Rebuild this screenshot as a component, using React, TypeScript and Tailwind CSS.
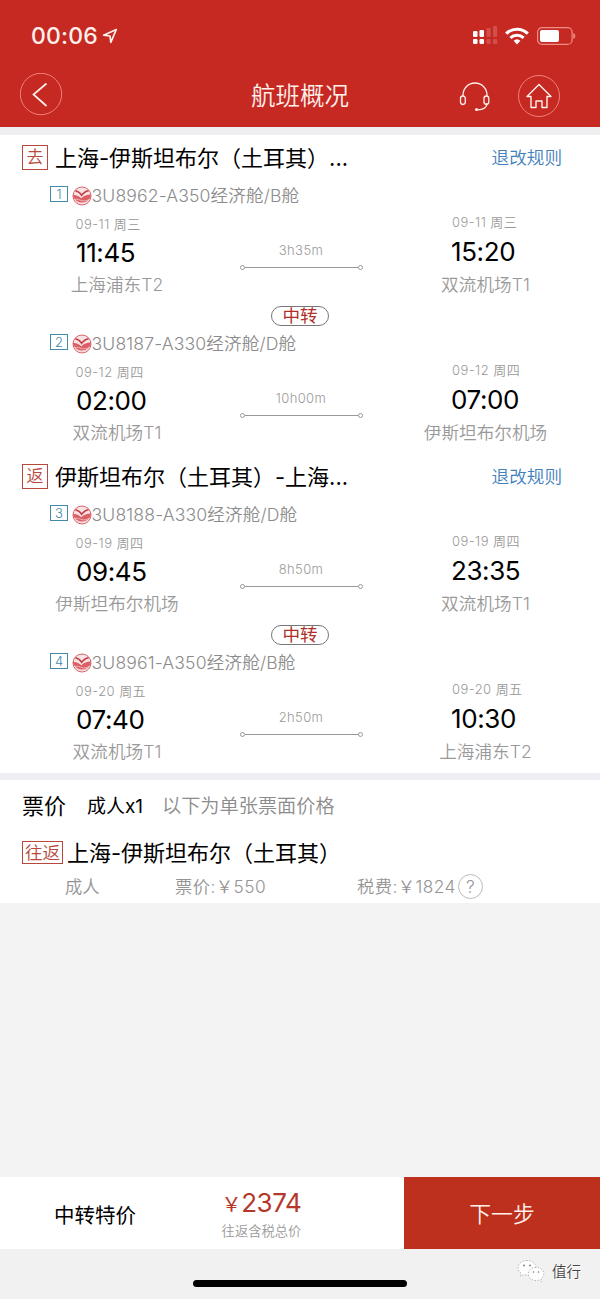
import React from "react";

type Stop = { date: string; time: string; airport: string };
type Leg = { no: number; flight: string; from: Stop; to: Stop; duration: string };

const outbound: Leg[] = [
  {
    no: 1,
    flight: "3U8962-A350经济舱/B舱",
    from: { date: "09-11 周三", time: "11:45", airport: "上海浦东T2" },
    to: { date: "09-11 周三", time: "15:20", airport: "双流机场T1" },
    duration: "3h35m",
  },
  {
    no: 2,
    flight: "3U8187-A330经济舱/D舱",
    from: { date: "09-12 周四", time: "02:00", airport: "双流机场T1" },
    to: { date: "09-12 周四", time: "07:00", airport: "伊斯坦布尔机场" },
    duration: "10h00m",
  },
];

const inbound: Leg[] = [
  {
    no: 3,
    flight: "3U8188-A330经济舱/D舱",
    from: { date: "09-19 周四", time: "09:45", airport: "伊斯坦布尔机场" },
    to: { date: "09-19 周四", time: "23:35", airport: "双流机场T1" },
    duration: "8h50m",
  },
  {
    no: 4,
    flight: "3U8961-A350经济舱/B舱",
    from: { date: "09-20 周五", time: "07:40", airport: "双流机场T1" },
    to: { date: "09-20 周五", time: "10:30", airport: "上海浦东T2" },
    duration: "2h50m",
  },
];

function AirlineLogo() {
  return (
    <svg width="20" height="20" viewBox="0 0 20 20" className="shrink-0">
      <circle cx="10" cy="10" r="9" fill="#f7e3e3" stroke="#d9626a" strokeWidth="1" />
      <path d="M.8 9C4.500 8.600 7 10.400 9.400 12.200 12 9.800 15.500 8.400 19.200 8.600A9.300 9.300 0 0 1 .8 9Z" fill="#dc5f67" />
      <path d="M3.400 4.800C6 5.300 8.200 6.800 9.700 9.400 11.600 6.600 14 5.200 16.600 4.800" fill="none" stroke="#c43b44" strokeWidth="1.400" />
      <path d="M2.600 13.600c2.800-1 4.800.4 7.200 1s4.800.2 7.400-1.200M5.500 16.600c3 .5 6 .5 9-.4" fill="none" stroke="#f3c4c6" strokeWidth=".8" />
    </svg>
  );
}

function StopInfo({ stop, side }: { stop: Stop; side: "left" | "right" }) {
  const left = side === "left";
  return (
    <div className={left ? "flex w-[234px] flex-col" : "flex w-[228px] flex-col"}>
      <div
        className={
          left
            ? "mt-[7px] flex h-4 items-center pl-[75.500px] text-[13px] tracking-[0.45px] text-[#999]"
            : "mt-[5px] flex h-4 items-center pl-[80px] text-[13px] tracking-[0.45px] text-[#999]"
        }
      >
        {stop.date}
      </div>
      <div
        className={
          left
            ? "mt-[5px] flex h-8 items-center pl-[76px] text-[26px] font-normal tracking-[-0.4px] text-black"
            : "mt-[5px] flex h-8 items-center pl-[79px] pt-px text-[26px] font-normal tracking-[-0.4px] text-black"
        }
      >
        {stop.time}
      </div>
      <div
        className={
          left
            ? "mt-1.5 flex h-5 items-center justify-center text-[17.6px] tracking-[0.05px] text-[#999]"
            : "mt-2 flex h-5 items-center justify-center pr-px text-[17.6px] tracking-[0.05px] text-[#999]"
        }
      >
        {stop.airport}
      </div>
    </div>
  );
}

function LegRow({ leg }: { leg: Leg }) {
  return (
    <div className="h-[125px] font-[350]">
      <div className="flex h-7 items-center pl-[50px] pt-px">
        <span className="mb-[3px] flex h-4 w-[18px] items-center justify-center border border-[#4489a8] text-[13px] text-[#4489a8]">
          {leg.no}
        </span>
        <span className="ml-1 mr-[-0.5px]">
          <AirlineLogo />
        </span>
        <span className="text-[17.6px] tracking-[0.14px] text-[#8c8c8c]">{leg.flight}</span>
      </div>
      <div className="flex">
        <StopInfo stop={leg.from} side="left" />
        <div className="flex w-[138px] flex-col items-center pr-1 pt-[33px]">
          <div className="flex h-4 items-center text-[13px] tracking-[0.4px] text-[#999]">{leg.duration}</div>
          <div className="ml-px mt-[7px] flex w-[123px] items-center">
            <span className="h-[5px] w-[5px] rounded-full border border-[#999]" />
            <span className="h-px flex-1 bg-[#999]" />
            <span className="h-[5px] w-[5px] rounded-full border border-[#999]" />
          </div>
        </div>
        <StopInfo stop={leg.to} side="right" />
      </div>
    </div>
  );
}

function Journey({ tag, title, legs }: { tag: string; title: string; legs: Leg[] }) {
  return (
    <section>
      <div className="flex h-[46px] items-center pl-[22px] pr-[38px]">
        <span className="mb-0.5 flex h-[25px] w-[26px] items-center justify-center border border-[#b8483c] text-[17px] font-[350] text-[#b8483c]">
          {tag}
        </span>
        <h2 className="ml-[7px] flex-1 text-[22px] text-black">{title}</h2>
        <a className="mb-px text-[17.6px] font-[350] text-[#4080bc]">退改规则</a>
      </div>
      <LegRow leg={legs[0]} />
      <div className="flex h-[23px] items-start justify-center">
        <span className="flex h-[20px] w-[58px] items-center justify-center rounded-full border border-[#777] text-[17.6px] text-[#b02f28]">
          中转
        </span>
      </div>
      <LegRow leg={legs[1]} />
    </section>
  );
}

function Header() {
  return (
    <header className="h-[127px] bg-[#c62822] text-[#fff1ec]">
      <div className="flex h-[72px] items-center justify-between pl-[31px] pr-[24px]">
        <div className="flex items-center">
          <span className="text-[23px] font-medium tracking-[0.2px]">00:06</span>
          <svg width="16" height="16" viewBox="0 0 16 16" className="ml-1">
            <path d="M14.300 1.500 1.600 7.200 8 8 8.800 14.400Z" fill="none" stroke="currentColor" strokeWidth="1.700" strokeLinejoin="round" />
          </svg>
        </div>
        <div className="flex items-center">
          <svg width="25" height="20" viewBox="0 0 25 20" fill="#fff">
            <rect x="0" y="5" width="4.500" height="6" rx="1.200" />
            <rect x="6.500" y="4" width="4.500" height="7" rx="1.200" />
            <rect x="0" y="13" width="4.500" height="5" rx="1.200" />
            <rect x="6.500" y="13" width="4.500" height="5" rx="1.200" />
            <g opacity=".18">
              <rect x="13.500" y="2" width="4.200" height="9" rx="1" />
              <rect x="20" y="0" width="4.200" height="11" rx="1" />
              <rect x="13.500" y="13" width="4.200" height="5" rx="1" />
              <rect x="20" y="13" width="4.200" height="5" rx="1" />
            </g>
          </svg>
          <svg width="24" height="18" viewBox="0 0 24 18" className="ml-[7px]" fill="none" stroke="#fff" strokeWidth="3.200">
            <path d="M1.200 6.600C7.300.8 16.700.8 22.800 6.600" />
            <path d="M5.400 10.800C9 7.400 15 7.400 18.600 10.800" />
            <path d="M8.600 13.800a5 5 0 0 1 6.800 0L12 17.400Z" fill="#fff" stroke="none" />
          </svg>
          <svg width="39" height="18" viewBox="0 0 39 18" className="ml-2">
            <rect x=".6" y=".6" width="34.500" height="16.800" rx="4.500" fill="none" stroke="#ee8f87" strokeWidth="1.200" />
            <rect x="3" y="3" width="19" height="12" rx="2" fill="#fff" />
            <path d="M36.300 6v6q2-.7 2-3t-2-3Z" fill="#ee8f87" />
          </svg>
        </div>
      </div>
      <div className="flex h-[46px] items-center pl-5 pr-10">
        <svg width="43" height="43" viewBox="0 0 43 43" fill="none" className="-mt-0.5">
          <circle cx="21" cy="21" r="20.700" stroke="#f08078" />
          <path d="M26.500 10.500 13.500 21.500 26.500 33" stroke="#fff1ec" strokeWidth="1.700" />
        </svg>
        <h1 className="ml-[188px] mt-[3px] w-[208px] text-[24.500px] font-[350]">航班概况</h1>
        <svg width="32" height="30" viewBox="0 0 32 30" fill="none" stroke="currentColor" strokeWidth="1.300" className="mt-[3px]">
          <path d="M4 14V13a12 12 0 0 1 24 0v1M28 21c0 4.500-3 6.800-9.500 6.800" />
          <rect x="1.500" y="14" width="4.800" height="8.500" rx="2.400" />
          <rect x="25" y="14" width="4.800" height="8.500" rx="2.400" />
          <circle cx="17.500" cy="27.500" r="1.500" fill="currentColor" stroke="none" />
        </svg>
        <svg width="43" height="43" viewBox="0 0 43 43" fill="none" className="ml-[26px] mt-0.5">
          <circle cx="22" cy="21" r="20.500" stroke="#f08078" />
          <path d="M22 9.500 10 21.500H14V32.500H19V26H25V32.500H30V21.500H34Z" stroke="#fff1ec" strokeWidth="1.400" strokeLinejoin="round" />
        </svg>
      </div>
    </header>
  );
}

function Fare() {
  return (
    <section className="h-[123px] bg-white">
      <div className="flex h-[50px] items-center pl-[22px] pt-0.5">
        <span className="w-[65px] text-[22px] text-black">票价</span>
        <span className="w-[75px] text-[19px] text-black">成人x1</span>
        <span className="mt-0.5 text-[19.200px] font-[350] text-[#8c8c8c]">以下为单张票面价格</span>
      </div>
      <div className="flex h-[45px] items-center pl-[22px]">
        <span className="flex h-[23px] w-[41px] items-center justify-center border border-[#b8483c] text-[17.600px] font-[350] text-[#b8483c]">
          往返
        </span>
        <h2 className="ml-1 text-[22px] text-black">上海-伊斯坦布尔（土耳其）</h2>
      </div>
      <div className="flex h-[23px] items-center pl-[65px] text-[17.300px] font-[350] text-[#949494]">
        <span className="w-[110px]">成人</span>
        <span className="w-[182px] tracking-[0.450px]">票价:￥550</span>
        <span className="tracking-[0.450px]">税费:￥1824</span>
        <span className="ml-0.5 flex h-[25px] w-[25px] items-center justify-center rounded-full border border-[#bbb]">?</span>
      </div>
    </section>
  );
}

function Footer() {
  return (
    <footer>
      <div className="flex h-[72px] bg-white">
        <div className="flex w-[190px] items-center pl-[54px] pt-1.5 text-[20.500px] text-black">中转特价</div>
        <div className="flex w-[214px] flex-col items-center pr-[71px] pt-[9px]">
          <div className="flex h-8 items-center pt-px text-[26px] tracking-[-0.4px] text-[#b5382c]">
            <span className="mt-1 text-[20px]">￥</span>
            <span>2374</span>
          </div>
          <div className="mt-[6px] flex h-4 items-center text-[13.300px] font-[350] text-[#999]">往返含税总价</div>
        </div>
        <button className="flex flex-1 items-center justify-center bg-[#bc301d] pt-1 text-[21.800px] font-[350] text-[#fff1e8]">
          下一步
        </button>
      </div>
      <div className="relative flex h-[50px] justify-center bg-[#f1f1f1] pt-[31px]">
        <div className="h-[7px] w-[214px] rounded-full bg-black" />
        <div className="absolute right-[19px] top-[10px] flex items-center gap-[7px]">
          <svg width="28" height="26" viewBox="0 0 28 26" fill="#fff" stroke="#999" strokeWidth=".7" strokeDasharray="1.5 1.5">
            <path d="M10 1.500C4.800 1.500 1 4.700 1 8.800c0 2.400 1.200 4.200 3.200 5.600L3.600 17.200 7 15.600c1 .3 2 .4 3 .4 5.200 0 9-3.100 9-7.200S15.200 1.500 10 1.500Z" />
            <path d="M19 8.500c-4.500 0-7.800 2.800-7.800 6.500S14.500 21.500 19 21.500c.9 0 1.800-.1 2.600-.4L24.500 22.600 24 20c1.800-1.200 2.800-3 2.800-5 0-3.700-3.300-6.500-7.800-6.500Z" />
            <g fill="#777" stroke="none">
              <circle cx="7" cy="6.500" r=".9" />
              <circle cx="13" cy="6.500" r=".9" />
              <circle cx="16.500" cy="13" r=".8" />
              <circle cx="21.500" cy="13" r=".8" />
            </g>
          </svg>
          <span className="text-[14.500px] font-[350] text-[#444] [text-shadow:0_0_1px_#fff,1px_1px_0_#fff]">值行</span>
        </div>
      </div>
    </footer>
  );
}

export default function App() {
  return (
    <div className="flex h-[1299px] w-[600px] flex-col overflow-hidden whitespace-nowrap bg-[#f3f3f3] font-[Inter,'Noto_Sans_CJK_SC',sans-serif] leading-none">
      <Header />
      <div className="h-2 bg-[#efeff2]" />
      <main className="bg-white">
        <Journey tag="去" title="上海-伊斯坦布尔（土耳其）..." legs={outbound} />
        <Journey tag="返" title="伊斯坦布尔（土耳其）-上海..." legs={inbound} />
      </main>
      <div className="h-[7px] bg-[#eeedf4]" />
      <Fare />
      <div className="flex-1" />
      <Footer />
    </div>
  );
}
